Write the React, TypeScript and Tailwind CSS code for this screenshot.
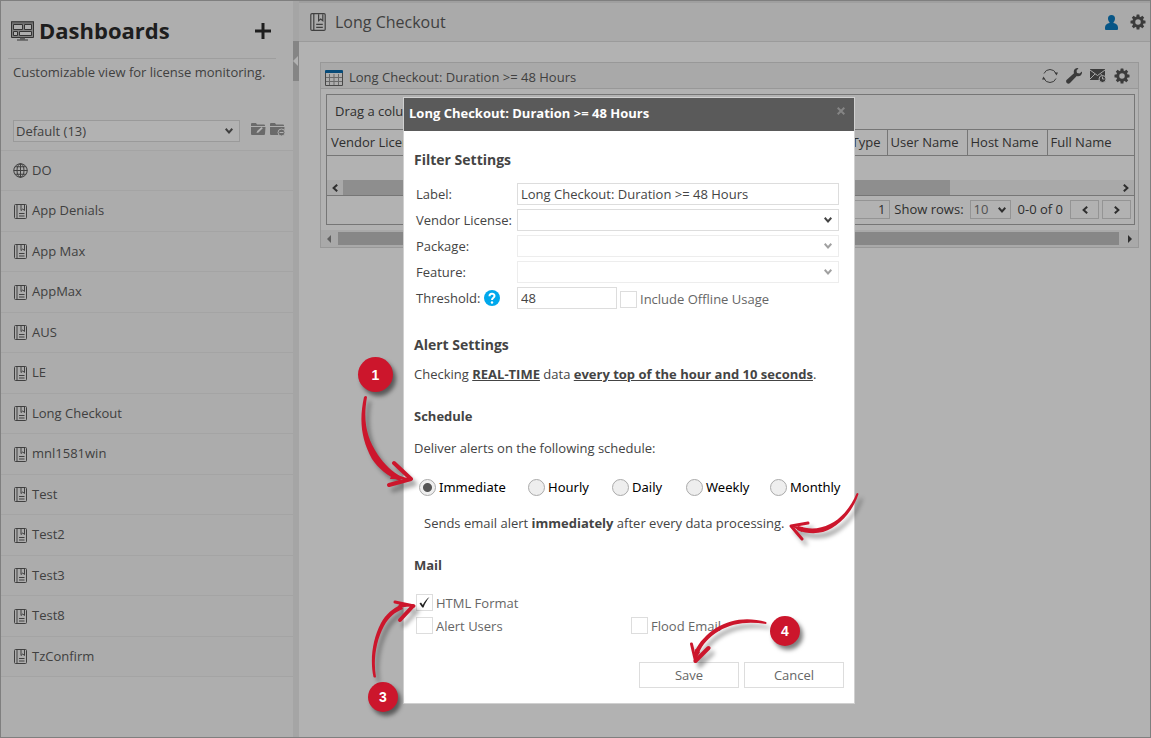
import type { ReactNode } from "react";

const dashboards = [
    "DO",
    "App Denials",
    "App Max",
    "AppMax",
    "AUS",
    "LE",
    "Long Checkout",
    "mnl1581win",
    "Test",
    "Test2",
    "Test3",
    "Test8",
    "TzConfirm",
];

const schedules = ["Immediate", "Hourly", "Daily", "Weekly", "Monthly"];

function BookIcon({ className }: { className: string }) {
    return (
        <svg viewBox="0 0 26 30" className={className} fill="none" stroke="currentColor" strokeWidth="2">
            <rect x="1" y="1" width="24" height="28" rx="2" />
            <path d="M6 1v28M14 2v11l3.500-3 3.500 3V2M10 19h11M10 24h11" />
        </svg>
    );
}

function GlobeIcon() {
    return (
        <svg viewBox="0 0 30 30" className="w-[15px] h-[15px]" fill="none" stroke="currentColor" strokeWidth="2">
            <circle cx="15" cy="15" r="13.500" />
            <ellipse cx="15" cy="15" rx="7" ry="13.500" />
            <path d="M15 1v28M1 15h28M4 7.500h22M4 22.500h22" />
        </svg>
    );
}

function MonitorIcon() {
    return (
        <svg viewBox="0 0 23 20" className="w-[23px] h-5 shrink-0" fill="none" stroke="#4a4a4a">
            <path d="M.5.500h22v16H.5z" fill="#b8b8b8" />
            <path d="M1 1.500h21" stroke="#888" strokeWidth="2" />
            <path d="M2.500 3.500h9v5h-9zM13.500 3.500h7v5h-7zM2.500 10.500h4v4h-4zM8.500 10.500h12v4h-12z" fill="#fafafa" />
            <path d="M9 17.500h5M6 19h11" stroke="#888" strokeWidth="1.500" />
        </svg>
    );
}

function GearIcon() {
    return (
        <svg viewBox="0 0 32 32" className="w-4 h-4">
            <g fill="currentColor">
                <rect x="13" y="1" width="6" height="30" rx="1" />
                <rect x="13" y="1" width="6" height="30" rx="1" transform="rotate(45 16 16)" />
                <rect x="13" y="1" width="6" height="30" rx="1" transform="rotate(90 16 16)" />
                <rect x="13" y="1" width="6" height="30" rx="1" transform="rotate(135 16 16)" />
            </g>
            <circle cx="16" cy="16" r="8.500" fill="#f3f3f3" stroke="currentColor" strokeWidth="6" />
        </svg>
    );
}

function UserIcon() {
    return (
        <svg viewBox="0 0 26 30" className="w-[13px] h-[15px] text-[#0c7cc0]" fill="currentColor">
            <path d="M13 0c4.500 0 7 3 7 7 0 3-1 5.500-3 7.500v1.500c5 1 9 4 9 9v3q0 2-2 2H2q-2 0-2-2v-3c0-5 4-8 9-9v-1.500C7 12.500 6 10 6 7c0-4 2.500-7 7-7z" />
        </svg>
    );
}

function RefreshIcon() {
    return (
        <svg viewBox="0 0 32 32" className="w-4 h-4" fill="none" stroke="currentColor" strokeWidth="2">
            <path d="M4 11A13 13 0 0 1 28 11M28 21A13 13 0 0 1 4 21" />
            <path d="M25 9l4 6 3-6zM7 23l-4-6-3 6z" fill="currentColor" stroke="none" />
        </svg>
    );
}

function WrenchIcon() {
    return (
        <svg viewBox="0 0 32 32" className="w-4 h-4" fill="currentColor">
            <path d="M25 0l-4 5.500 1 4.500 5 1L32 7c1 7-5 11-10.500 9L8 30c-4 4-10-2-7-6l15-13.500C14 5 18-1 25 0z" />
        </svg>
    );
}

function MailClockIcon() {
    return (
        <svg viewBox="0 0 32 28" className="w-4 h-[14px]">
            <path d="M0 0h30v22H0z" fill="currentColor" />
            <path d="M0 2l15 11L30 2M0 20l10-10M30 18l-9-8" stroke="#f3f3f3" strokeWidth="2" fill="none" />
            <circle cx="25" cy="20" r="7" fill="currentColor" stroke="#f3f3f3" strokeWidth="2" />
            <path d="M25 15v5h4" stroke="#f3f3f3" strokeWidth="2" fill="none" />
        </svg>
    );
}

function TableIcon() {
    return (
        <svg viewBox="0 0 18 16" className="w-[18px] h-4">
            <path d="M0 1h18v15H0z" fill="#f8f8f8" />
            <path d="M4.500 4v11M9 4v11M13.500 4v11M1 7.500h16M1 11.500h16" stroke="#999" fill="none" />
            <path d="M.5 1v14.500h17V1" stroke="#666" fill="none" />
            <path d="M0 1q0-1 1-1h16q1 0 1 1v2H0z" fill="#0b6cae" />
        </svg>
    );
}

function FolderIcon({ children }: { children: ReactNode }) {
    return (
        <svg viewBox="0 0 15 13" className="w-[15px] h-[13px] text-[#989898]" fill="currentColor">
            <path d="M0 1q0-1 1-1h4l1 1.500h7q1 0 1 1V3H0zM0 4h14.500l-.5 7q0 1-1 1H1q-1 0-1-1z" />
            {children}
        </svg>
    );
}

function Chevron({ className }: { className: string }) {
    return (
        <svg viewBox="0 0 8 6" className={className} fill="none" stroke="currentColor" strokeWidth="2">
            <path d="M.7.800L4 4.400 7.300.800" />
        </svg>
    );
}

function SelectBox({ id, disabled }: { id: string; disabled?: boolean }) {
    return (
        <div className="relative w-[322px] text-[#444] has-disabled:opacity-50">
            <select id={id} disabled={disabled} className="block w-full h-[22px] appearance-none border border-[#ddd] bg-white">
                <option></option>
            </select>
            <Chevron className="absolute right-[7px] top-2 w-2 h-[6px] pointer-events-none" />
        </div>
    );
}

function CheckBox({ label, checked }: { label: string; checked?: boolean }) {
    return (
        <label className="flex items-center gap-[3px] h-[17px] text-[#666]">
            <span className="relative block w-[17px] h-[17px]">
                <input type="checkbox" defaultChecked={checked} className="peer block w-full h-full appearance-none border border-[#ddd] bg-white" />
                <svg
                    viewBox="0 0 17 17"
                    className="absolute inset-0 hidden peer-checked:block pointer-events-none"
                    fill="#222"
                >
                    <path d="M3.500 9.500l1.500-1 1.800 2.500C8.500 7.500 10.500 5 13.500 3 11 6 9 9.500 7.500 13.500H6.300z" />
                </svg>
            </span>
            {label}
        </label>
    );
}

function Sidebar() {
    return (
        <aside className="w-[292px] shrink-0 bg-[#fafafa]">
            <div className="ml-[7px] mr-[17px] h-[58px] flex items-center border-b border-[#e2e2e2] pt-[2px] pl-[3px] pr-[5px] text-[#2c2c2c]">
                <MonitorIcon />
                <h1 className="ml-[5px] flex-1 text-[22px] font-bold">Dashboards</h1>
                <button aria-label="Add dashboard">
                    <svg viewBox="0 0 16 16" className="w-4 h-4" fill="currentColor">
                        <path d="M6.500 0h3v6.500H16v3H9.500V16h-3V9.500H0v-3h6.500z" />
                    </svg>
                </button>
            </div>
            <p className="mt-[3px] ml-3 leading-5">Customizable view for license monitoring.</p>
            <div className="mt-[38px] ml-3 flex">
                <div className="relative w-[227px]">
                    <select aria-label="Dashboard group" className="block w-full h-[22px] appearance-none border border-[#ddd] bg-white pt-px pl-[2px]">
                        <option>Default (13)</option>
                    </select>
                    <Chevron className="absolute right-[7px] top-2 w-2 h-[6px] pointer-events-none" />
                </div>
                <div className="ml-[11px] mt-[3px] flex items-start gap-1">
                    <button aria-label="Edit group">
                        <FolderIcon>
                            <path d="M5.500 10l.7-2L10.500 4l1.300 1.300-4.300 4.200z" fill="#fff" />
                        </FolderIcon>
                    </button>
                    <button aria-label="Remove group">
                        <FolderIcon>
                            <circle cx="11.500" cy="9.500" r="3.500" stroke="#fafafa" />
                            <path d="M9.500 9.500h4" stroke="#fff" />
                        </FolderIcon>
                    </button>
                </div>
            </div>
            <ul className="mt-2 border-t border-[#ebebeb] bg-[#f6f6f6]">
                {dashboards.map((name, i) => (
                    <li key={name} className="odd:h-[40px] even:h-[41px] border-b border-[#ebebeb]">
                        <a href="#" className="flex h-full items-center pl-3 gap-1">
                            {i === 0 ? <GlobeIcon /> : <BookIcon className="w-[15px] h-[15px]" />}
                            {name}
                        </a>
                    </li>
                ))}
            </ul>
        </aside>
    );
}

function Splitter() {
    return (
        <div className="w-[6px] shrink-0 bg-[#ededed]">
            <button aria-label="Collapse sidebar" className="mt-10 flex h-10 w-[6px] items-center bg-[#bfbfbf]">
                <svg viewBox="0 0 5 10" className="w-[5px] h-[10px]" fill="#fff">
                    <path d="M5 0v10L0 5z" />
                </svg>
            </button>
        </div>
    );
}

function LicenseWidget() {
    return (
        <section className="border border-[#dadada]">
            <div className="flex h-[26px] items-center border-b border-[#dadada] bg-[#f3f3f3] pl-1 pr-2">
                <div className="pt-1">
                    <TableIcon />
                </div>
                <h3 className="ml-[6px] flex-1 pt-1">Long Checkout: Duration &gt;= 48 Hours</h3>
                <div className="flex items-center gap-2 pt-px text-[#555]">
                    <RefreshIcon />
                    <WrenchIcon />
                    <MailClockIcon />
                    <GearIcon />
                </div>
            </div>
            <div className="ml-[5px] mr-[3px] mt-[5px] border border-[#aaa] text-[#444]">
                <div className="h-[34px] pl-2 leading-8">Drag a column</div>
                <table className="w-full table-fixed border-y border-[#aaa]">
                    <thead>
                        <tr className="h-[26px] text-left">
                            <th className="pt-px pl-1 font-normal">Vendor License</th>
                            <th className="w-[80px] pt-px pr-[6px] text-right font-normal">Type</th>
                            <th className="w-[80px] border-l border-[#aaa] pt-px pl-[3px] font-normal">User Name</th>
                            <th className="w-[80px] border-l border-[#aaa] pt-px pl-[3px] font-normal">Host Name</th>
                            <th className="w-[87px] border-l border-[#aaa] pt-px pl-[3px] font-normal">Full Name</th>
                        </tr>
                    </thead>
                </table>
                <div className="mt-6 flex h-[15px] items-center bg-[#f2f2f2]">
                    <Chevron className="ml-1 w-2 h-[6px] rotate-90" />
                    <div className="ml-1 h-[15px] w-[607px] bg-[#ccc]" />
                    <Chevron className="ml-auto mr-1 w-2 h-[6px] -rotate-90" />
                </div>
                <div className="flex h-[29px] items-center justify-end border-t border-[#aaa] pr-[3px] pb-px">
                    <input aria-label="Page" defaultValue="1" className="w-[36px] h-[19px] border border-[#d4d4d4] pr-1 text-right" />
                    <span className="ml-1">Show rows:</span>
                    <div className="relative ml-[6px]">
                        <select aria-label="Rows" className="block w-[41px] h-[19px] appearance-none border border-[#d4d4d4] pl-[3px] leading-none text-[#777]">
                            <option>10</option>
                        </select>
                        <Chevron className="absolute right-[5px] top-[7px] w-2 h-[6px] pointer-events-none" />
                    </div>
                    <span className="ml-[7px]">0-0 of 0</span>
                    <button aria-label="Previous page" className="ml-[7px] flex h-[19px] w-[29px] items-center justify-center border border-[#d4d4d4]">
                        <Chevron className="w-2 h-[6px] rotate-90" />
                    </button>
                    <button aria-label="Next page" className="ml-[3px] flex h-[19px] w-[29px] items-center justify-center border border-[#d4d4d4]">
                        <Chevron className="w-2 h-[6px] -rotate-90" />
                    </button>
                </div>
            </div>
            <div className="mt-[5px] flex h-[17px] items-center bg-[#f2f2f2]">
                <svg viewBox="0 0 4 8" className="ml-[6px] w-1 h-2" fill="#888">
                    <path d="M4 0v8L0 4z" />
                </svg>
                <div className="mx-[7px] h-[13px] flex-1 bg-[#c2c2c2]" />
                <svg viewBox="0 0 4 8" className="ml-[2px] mr-[6px] w-1 h-2" fill="#444">
                    <path d="M0 0v8l4-4z" />
                </svg>
            </div>
        </section>
    );
}

function FilterDialog() {
    return (
        <div role="dialog" aria-labelledby="dialog-title" className="w-[452px] border border-[#d0d0d0] bg-white text-[#444]">
            <div className="flex h-[33px] justify-between bg-[#5a5a5a] pl-[5px] pr-[9px]">
                <h2 id="dialog-title" className="font-bold leading-[31px] text-white">
                    Long Checkout: Duration &gt;= 48 Hours
                </h2>
                <button aria-label="Close" className="mt-[9px] h-2">
                    <svg viewBox="0 0 8 8" className="w-2 h-2" stroke="#858585" strokeWidth="2">
                        <path d="M.7.700l6.600 6.600M7.300.700L.7 7.300" />
                    </svg>
                </button>
            </div>
            <form className="px-[10px] pt-[19px] pb-[15px] leading-5">
                <h3 className="text-sm leading-5 font-bold">Filter Settings</h3>
                <div className="mt-[13px] grid grid-cols-[101px_1fr] gap-y-1 pl-[2px] leading-[22px]">
                    <label htmlFor="label">Label:</label>
                    <input id="label" defaultValue="Long Checkout: Duration >= 48 Hours" className="w-[322px] h-[22px] border border-[#ddd] px-[3px]" />
                    <label htmlFor="vendor">Vendor License:</label>
                    <SelectBox id="vendor" />
                    <label htmlFor="package">Package:</label>
                    <SelectBox id="package" disabled />
                    <label htmlFor="feature">Feature:</label>
                    <SelectBox id="feature" disabled />
                    <div className="flex items-center gap-1">
                        <label htmlFor="threshold">Threshold:</label>
                        <svg viewBox="0 0 16 16" className="w-4 h-4">
                            <circle cx="8" cy="8" r="8" fill="#00a8ec" />
                            <path d="M5.500 6.200C5.500 3 10.500 3 10.500 6 10.500 7.800 8 7.800 8 10" fill="none" stroke="#fff" strokeWidth="2" />
                            <circle cx="8" cy="12.500" r="1.200" fill="#fff" />
                        </svg>
                    </div>
                    <div className="flex items-center gap-[3px]">
                        <input id="threshold" defaultValue="48" className="w-[100px] h-[22px] border border-[#ddd] px-[3px]" />
                        <div className="pt-[2px]">
                            <CheckBox label="Include Offline Usage" />
                        </div>
                    </div>
                </div>

                <h3 className="mt-[26px] text-sm leading-5 font-bold">Alert Settings</h3>
                <p className="mt-[9px]">
                    Checking <b className="underline">REAL-TIME</b> data <b className="underline">every top of the hour and 10 seconds</b>.
                </p>

                <h4 className="mt-[22px] font-bold">Schedule</h4>
                <p className="mt-3">Deliver alerts on the following schedule:</p>
                <div className="mt-[19px] grid grid-cols-[109px_84px_74px_84px_auto] pl-[5px] font-['Noto_Sans',sans-serif] text-black">
                    {schedules.map((name) => (
                        <label key={name} className="flex items-center gap-[3px]">
                            <input
                                type="radio"
                                name="schedule"
                                defaultChecked={name === "Immediate"}
                                className="w-[17px] h-[17px] shrink-0 appearance-none rounded-full border border-[#aaa] bg-[#eee] checked:bg-[radial-gradient(circle,#555_4px,#eee_5px)]"
                            />
                            {name}
                        </label>
                    ))}
                </div>
                <p className="mt-4 pl-[10px]">
                    Sends email alert <b>immediately</b> after every data processing.
                </p>

                <h4 className="mt-[22px] font-bold">Mail</h4>
                <div className="mt-[19px] grid grid-cols-[215px_1fr] gap-y-[6px] pl-[2px]">
                    <div className="col-span-2">
                        <CheckBox label="HTML Format" checked />
                    </div>
                    <CheckBox label="Alert Users" />
                    <CheckBox label="Flood Email" />
                </div>
                <div className="mt-7 flex justify-end gap-[5px] text-[#666]">
                    <button type="button" className="w-[100px] h-[26px] border border-[#ddd] bg-white">
                        Save
                    </button>
                    <button type="button" className="w-[100px] h-[26px] border border-[#ddd] bg-white">
                        Cancel
                    </button>
                </div>
            </form>
        </div>
    );
}

/* Numbered callouts and arrows drawn over the page */
function Callouts() {
    const badge =
        "absolute flex items-center justify-center rounded-full bg-[#cc162c] font-['Liberation_Sans',sans-serif] font-bold text-white shadow-[3px_4px_4px_rgba(0,0,0,0.5)]";
    const arrow = "absolute overflow-visible pointer-events-none drop-shadow-[4px_5px_2px_rgba(0,0,0,0.35)]";
    return (
        <>
            <span className={`${badge} left-[357px] top-[356px] w-[35px] h-[35px] text-sm`}>1</span>
            <span className={`${badge} left-[367px] top-[681px] w-[30px] h-[30px] text-sm`}>3</span>
            <span className={`${badge} left-[769px] top-[615px] w-[30px] h-[30px] text-sm`}>4</span>

            <svg viewBox="360 395 54 92" className={`${arrow} left-[359px] top-[394px] w-[54px] h-[92px]`}>
                <path d="M364 397q2-2 3 0C363 420 366 437 378 455c6 9 14 17 24 22l-2 4c-13-5-22-13-28-22C361 439 359 420 364 397z" fill="#cc162c" />
                <path d="M394 463l17 16-22 6" fill="none" stroke="#cc162c" strokeWidth="4" strokeLinecap="round" strokeLinejoin="round" />
                <path d="M411 479l-19-5-2 5z" fill="#cc162c" />
            </svg>
            <svg viewBox="789 492 70 49" className={`${arrow} left-[788px] top-[491px] w-[70px] h-[49px]`}>
                <path d="M856.500 493.500q1.500-1 2 .5C854 508 844 521 832 528c-10 6-22 7-35 2l1-4c12 4 22 3 32-2 11-5 21-17 26.500-30.500z" fill="#cc162c" />
                <path d="M808 523l-17 3 11 13" fill="none" stroke="#cc162c" strokeWidth="3" strokeLinecap="round" strokeLinejoin="round" />
                <path d="M791 526l12 1-1 5z" fill="#cc162c" />
            </svg>
            <svg viewBox="370 600 46 79" className={`${arrow} left-[369px] top-[599px] w-[46px] h-[79px]`}>
                <path d="M376 677q-1 1-2.500 0C370 661 372 640 381 623c5-9 12-15 20-18l2 4c-8 3-14 8-19 17-8 15-11 34-8 51z" fill="#cc162c" />
                <path d="M395 602l19 4" fill="none" stroke="#cc162c" strokeWidth="3" strokeLinecap="round" />
                <path d="M413 606l-13 14" fill="none" stroke="#cc162c" strokeWidth="4" strokeLinecap="round" />
                <path d="M413 606l-13-3-3 5z" fill="#cc162c" />
            </svg>
            <svg viewBox="690 618 78 46" className={`${arrow} left-[689px] top-[617px] w-[78px] h-[46px]`}>
                <path d="M766 622q1 1 0 2c-18-3-34-1-47 7-10 6-17 14-20 22l-4-2c4-9 12-17 21-23 15-9 32-11 50-6z" fill="#cc162c" />
                <path d="M691.500 644l4 17" fill="none" stroke="#cc162c" strokeWidth="3" strokeLinecap="round" />
                <path d="M695.500 661l13-13" fill="none" stroke="#cc162c" strokeWidth="4" strokeLinecap="round" />
                <path d="M695 661l0-12 5 3z" fill="#cc162c" />
            </svg>
        </>
    );
}

export default function App() {
    return (
        <div className="relative flex min-h-screen border border-[#7f7f7f] bg-white font-['Open_Sans',sans-serif] text-[13px] text-[#5c5c5c]">
            <Sidebar />
            <Splitter />
            <div className="min-w-0 flex-1">
                <header className="flex h-[41px] items-center border-t-2 border-b border-b-[#dedede] border-t-[#e4e4e4] bg-[#f4f4f4] pl-[11px] pr-1">
                    <BookIcon className="w-4 h-[18px]" />
                    <h2 className="ml-[9px] flex-1 text-base">Long Checkout</h2>
                    <div className="flex items-center gap-3 text-[#555]">
                        <UserIcon />
                        <GearIcon />
                    </div>
                </header>
                <main className="pt-5 pr-[11px] pl-[21px]">
                    <LicenseWidget />
                </main>
            </div>

            <div className="absolute inset-0 bg-black/30 pl-[402px] pt-[96px]">
                <FilterDialog />
                <Callouts />
            </div>
        </div>
    );
}
